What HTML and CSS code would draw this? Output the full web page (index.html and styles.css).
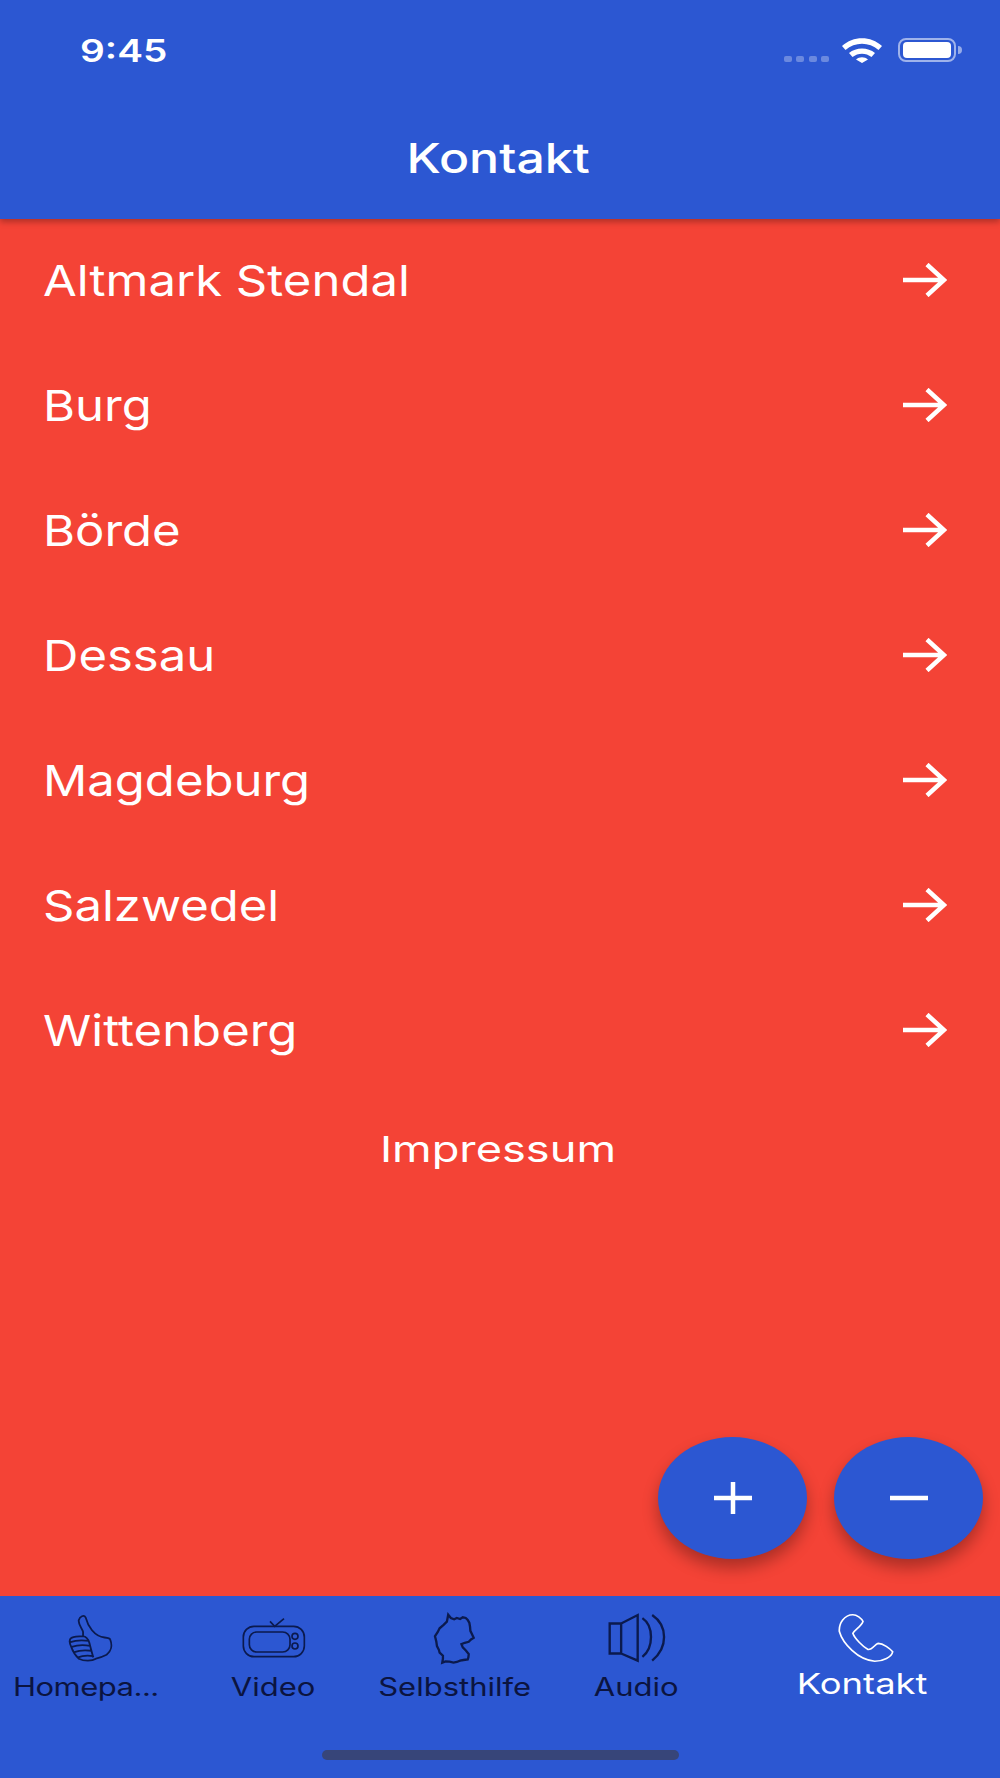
FILE: index.html
```html
<!DOCTYPE html>
<html lang="de">
<head>
<meta charset="utf-8">
<title>Kontakt</title>
<link rel="stylesheet" href="styles.css">
</head>
<body>
<div class="app">
  <header class="header">
    <div class="status">
      <span class="time">9:45</span>
      <div class="status-icons">
        <div class="signal"><i></i><i></i><i></i><i></i></div>
        <svg class="wifi" width="40" height="25" viewBox="0 0 40 25"><path d="M0 8C11-2.500 29-2.500 40 8L36.500 12C27 3.500 13 3.500 3.500 12ZM7 15C14 9 26 9 33 15L29.500 19C24 14.500 16 14.500 10.500 19ZM14 21.500C17.500 18.500 22.500 18.500 26 21.500L20 25Z" fill="#fff"/></svg>
        <div class="battery"><div class="battery-fill"></div></div>
        <div class="nub"></div>
      </div>
    </div>
    <div class="title-row"><h1 class="title">Kontakt</h1></div>
  </header>

  <main class="main">
    <ul class="list">
      <li class="row"><span class="row-label">Altmark Stendal</span><svg class="arrow" width="44" height="34" viewBox="0 0 44 34"><path d="M0 17H41M24 1.500L41 17L24 32.500"/></svg></li>
      <li class="row"><span class="row-label">Burg</span><svg class="arrow" width="44" height="34" viewBox="0 0 44 34"><path d="M0 17H41M24 1.500L41 17L24 32.500"/></svg></li>
      <li class="row"><span class="row-label">Börde</span><svg class="arrow" width="44" height="34" viewBox="0 0 44 34"><path d="M0 17H41M24 1.500L41 17L24 32.500"/></svg></li>
      <li class="row"><span class="row-label">Dessau</span><svg class="arrow" width="44" height="34" viewBox="0 0 44 34"><path d="M0 17H41M24 1.500L41 17L24 32.500"/></svg></li>
      <li class="row"><span class="row-label">Magdeburg</span><svg class="arrow" width="44" height="34" viewBox="0 0 44 34"><path d="M0 17H41M24 1.500L41 17L24 32.500"/></svg></li>
      <li class="row"><span class="row-label">Salzwedel</span><svg class="arrow" width="44" height="34" viewBox="0 0 44 34"><path d="M0 17H41M24 1.500L41 17L24 32.500"/></svg></li>
      <li class="row"><span class="row-label">Wittenberg</span><svg class="arrow" width="44" height="34" viewBox="0 0 44 34"><path d="M0 17H41M24 1.500L41 17L24 32.500"/></svg></li>
    </ul>
    <div class="impressum"><span class="impressum-label">Impressum</span></div>
    <div class="fabs">
      <button class="fab" aria-label="Plus"><svg width="38" height="32" viewBox="0 0 38 32"><path d="M0 16H38M19 0V32"/></svg></button>
      <button class="fab" aria-label="Minus"><svg width="38" height="32" viewBox="0 0 38 32"><path d="M0 16H38"/></svg></button>
    </div>
  </main>

  <nav class="tabs">
    <div class="tab">
      <div class="icon-box"><svg class="tab-icon icon-thumb" width="46" height="48" viewBox="40 25 138 145"><path d="M85 78C80 66 70 54 72 44C75 32 88 26 93 36C97 52 104 64 112 74C122 86 132 94 150 96C160 97 166 98 167 102C174 120 170 138 156 148C144 154 134 158 124 160C112 168 88 168 72 160C62 150 54 138 50 126C44 114 42 102 50 97C60 92 74 92 85 92C92 93 100 100 104 112C108 128 112 144 116 156M85 78L85 92M47 110C62 104 86 104 103 106M51 124C68 118 90 118 107 121M59 140C74 134 94 134 111 136M70 156C84 150 98 150 115 152"/></svg></div>
      <span class="tab-label tab-label-short">Homepa...</span>
    </div>
    <div class="tab">
      <div class="icon-box"><svg class="tab-icon icon-tv" width="64" height="42" viewBox="727 114 192 122"><rect x="731" y="140" width="183" height="91" rx="32"/><rect x="749" y="157" width="122" height="60" rx="22"/><circle cx="886" cy="170" r="9"/><circle cx="886" cy="199" r="9"/><path d="M811 125L825 140L853 117"/></svg></div>
      <span class="tab-label">Video</span>
    </div>
    <div class="tab">
      <div class="icon-box"><svg class="tab-icon icon-map" width="43" height="53" viewBox="42 24 130 158"><path d="M88 31L96 41L106 45L114 41L124 44L132 39L141 41L147 47L152 56L154 68L155 80L160 90L165 101L157 106L150 113L138 116L128 120L132 130L142 140L150 150L149 160L147 166L134 168L124 170L114 174L104 176L92 173L80 172L70 176L72 164L72 155L62 146L60 138L54 126L52 112L48 96L56 84L62 72L74 62L84 52L86 42Z"/></svg></div>
      <span class="tab-label">Selbsthilfe</span>
    </div>
    <div class="tab">
      <div class="icon-box"><svg class="tab-icon icon-audio" width="58" height="50" viewBox="326 104 172 144"><path d="M331 133H365V222H331ZM365 133L414 108V243L365 222M428 117C462 140 462 205 428 232M457 108C504 140 504 205 457 243"/></svg></div>
      <span class="tab-label">Audio</span>
    </div>
    <div class="tab tab-active">
      <div class="icon-box"><svg class="tab-icon icon-phone" width="56" height="50" viewBox="1016 102 166 144"><path d="M1060 105C1035 105 1018 130 1020 155C1030 190 1075 240 1125 243C1150 243 1175 230 1178 215C1170 205 1150 190 1135 190C1125 192 1118 210 1105 208C1090 200 1065 175 1060 160C1065 150 1085 140 1090 125C1085 115 1072 105 1060 105Z"/></svg></div>
      <span class="tab-label">Kontakt</span>
    </div>
    <div class="home-indicator"></div>
  </nav>
</div>
</body>
</html>
```

FILE: styles.css
```css
* { box-sizing: border-box; }
html, body { margin: 0; padding: 0; }
body { font-family: Inter, "Liberation Sans", sans-serif; color: #fff; }
.app { width: 1000px; height: 1778px; display: flex; flex-direction: column; background: #f44336; overflow: hidden; }

.header { height: 219px; background: #2c57d2; box-shadow: 0 3px 6px rgba(0,0,0,.28); position: relative; z-index: 2; flex: none; }
.status { height: 100px; display: flex; align-items: center; justify-content: space-between; padding: 0 38px 0 80px; }
.time { font-size: 31px; font-weight: 600; line-height: 1; display: inline-block; transform: scaleX(1.25); transform-origin: left center; }
.status-icons { display: flex; align-items: center; }
.signal { display: flex; gap: 4.5px; margin-right: 13px; padding-top: 17px; }
.signal i { width: 8px; height: 6px; border-radius: 2px; background: rgba(255,255,255,.3); display: block; }
.wifi { margin-right: 16px; }
.battery { width: 58px; height: 24px; border: 2px solid rgba(255,255,255,.55); border-radius: 8px; padding: 2px 3px; }
.battery-fill { width: 100%; height: 100%; background: #fff; border-radius: 4px; }
.nub { width: 4px; height: 8px; margin-left: 2px; background: rgba(255,255,255,.5); border-radius: 0 4px 4px 0; }
.title-row { height: 118px; display: flex; justify-content: center; align-items: center; padding: 0 4px 2px 0; }
.title { margin: 0; font-size: 41px; font-weight: 500; line-height: 1; display: inline-block; transform: scaleX(1.22); }

.main { flex: 1; display: flex; flex-direction: column; min-height: 0; }
.list { list-style: none; margin: -1px 0 0; padding: 0; }
.row { height: 125px; display: flex; align-items: center; justify-content: space-between; padding: 0 53px 0 43px; }
.row-label { font-size: 43px; line-height: 1; display: inline-block; transform: scaleX(1.14); transform-origin: left center; white-space: nowrap; }
.arrow { fill: none; stroke: #fff; stroke-width: 4.500px; margin-top: -1px; }
.impressum { text-align: center; padding-right: 4px; margin-top: 34px; }
.impressum-label { font-size: 36px; line-height: 44px; display: inline-block; transform: scaleX(1.256); }
.fabs { margin-top: auto; display: flex; justify-content: flex-end; gap: 27px; padding: 0 17px 37px 0; }
.fab { width: 149px; height: 122px; border: 0; border-radius: 50%; background: #2c57d2; box-shadow: 0 9px 16px rgba(0,0,0,.3); display: flex; align-items: center; justify-content: center; padding: 0; }
.fab svg { fill: none; stroke: #fff; stroke-width: 4.500px; }

.tabs { height: 182px; flex: none; background: #2c57d2; display: flex; position: relative; }
.tab { flex: 2 1 0; display: flex; flex-direction: column; align-items: center; color: #0b1440; height: 100px; }
.tab-active { flex-grow: 3; color: #fff; }
.icon-box { height: 56px; margin-top: 14px; display: flex; align-items: center; justify-content: center; flex: none; }
.tab-icon { fill: none; stroke: #0b1a4e; stroke-width: 5px; flex: none; }
.icon-thumb { stroke-width: 5.500px; }
.icon-tv { margin-left: 2px; }
.icon-map { stroke-width: 7px; }
.icon-audio { margin-left: 2px; stroke-width: 7px; }
.icon-phone { stroke: #fff; margin-left: 4px; }
.tab-label { font-size: 25px; line-height: 32px; margin-top: 5px; display: inline-block; transform: scaleX(1.24); white-space: nowrap; }
.tab-label-short { margin-right: 10px; letter-spacing: -0.4px; }
.tab-active .tab-label { font-size: 29px; margin: 2px 4px 0 0; transform: scaleX(1.255); }
.home-indicator { position: absolute; left: 322px; top: 154px; width: 357px; height: 10px; border-radius: 5px; background: #374579; }
```
